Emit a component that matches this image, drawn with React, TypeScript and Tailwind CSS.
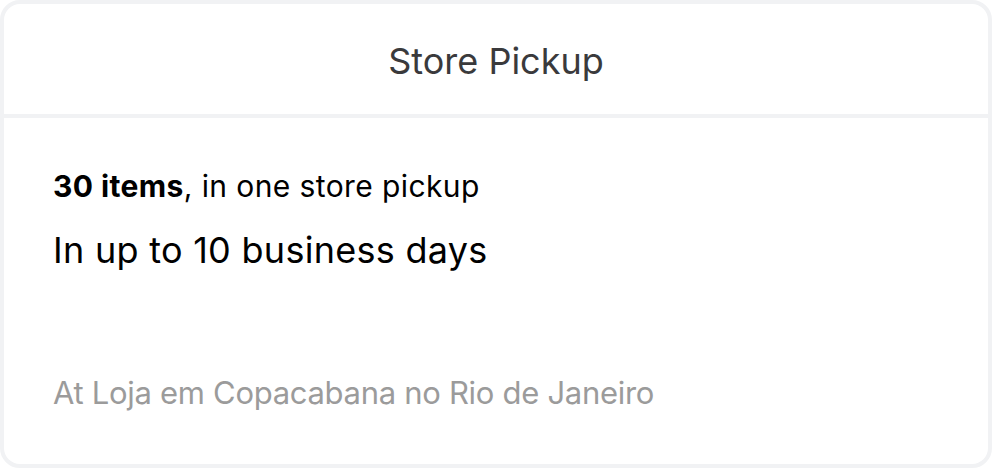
import React from 'react';

export const StorePickupCard = () => {
  return (
    <div className="w-[992px] h-[468px] bg-white" style={{ fontFamily: 'Inter, "Noto Sans", sans-serif' }}>
      <div className="h-full flex flex-col border-4 border-[#f1f2f4] rounded-[20px] overflow-hidden">
        <div className="h-[114px] shrink-0 flex items-center justify-center pt-[3px] border-b-4 border-[#f1f2f4]">
          <h2 className="text-[36px] leading-[44px] text-[#3a3a3c]">Store Pickup</h2>
        </div>

        <div className="flex-1 flex flex-col px-[49px] pt-[50px] pb-[51px]">
          <p className="text-[30px] leading-[36px] tracking-[0.4px] text-black">
            <span className="font-bold">30 items</span>, in one store pickup
          </p>
          <p className="mt-[24px] text-[36px] leading-[44px] tracking-[0.28px] text-black">
            In up to 10 business days
          </p>
          <p className="mt-auto text-[31px] leading-[40px] tracking-[-0.3px] text-[#9b9b9b]">
            At Loja em Copacabana no Rio de Janeiro
          </p>
        </div>
      </div>
    </div>
  );
};

export default StorePickupCard;
